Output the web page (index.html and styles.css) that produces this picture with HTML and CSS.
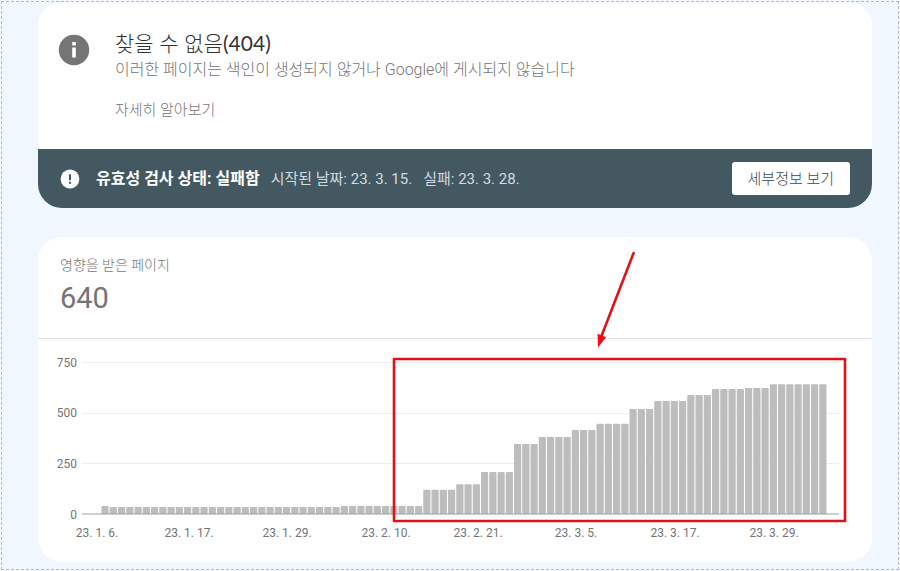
FILE: index.html
```html
<!DOCTYPE html>
<html lang="ko">
<head>
    <meta charset="UTF-8">
    <meta name="viewport" content="width=device-width, initial-scale=1.0">
    <title>찾을 수 없음(404)</title>
    <link rel="stylesheet" href="styles.css">
</head>

<body>

<main class="page">
    <!-- Issue summary -->
    <section class="card">
        <div class="issue">
            <svg class="info-icon" viewBox="0 0 32 32" aria-hidden="true">
                <circle cx="16" cy="16" r="15.2" fill="#757575"/>
                <path d="M14.2 8h3.6v3.4h-3.6zM14.2 13.6h3.6v10h-3.6z" fill="#fff"/>
            </svg>
            <div>
                <h1 class="title">찾을 수 없음<span class="code">(404)</span></h1>
                <p class="text">이러한 페이지는 색인이 생성되지 않거나 Google에 게시되지 않습니다</p>
                <a class="more" href="#">자세히 알아보기</a>
            </div>
        </div>
        <div class="status">
            <svg class="alert-icon" viewBox="0 0 20 20" aria-hidden="true">
                <circle cx="10" cy="10" r="9.4" fill="#fff"/>
                <path d="M9 5.2h2v6H9zM9 12.8h2v2H9z" fill="#455a64"/>
            </svg>
            <strong class="state">유효성 검사 상태: 실패함</strong>
            <span class="date">시작된 날짜: 23. 3. 15.</span>
            <span class="date">실패: 23. 3. 28.</span>
            <button class="details" type="button">세부정보 보기</button>
        </div>
    </section>

    <!-- Affected pages -->
    <section class="card chart-card">
        <div class="count">
            <h2 class="label">영향을 받은 페이지</h2>
            <div class="number">640</div>
        </div>
        <svg class="chart" viewBox="0 0 834 223" role="img" aria-label="영향을 받은 페이지">
            <g class="grid">
                <path d="M44 23.5H801M44 74.5H801M44 124.5H801"/>
            </g>
            <g id="bars" class="bars"></g>
            <path class="base" d="M44 175H801"/>
            <g class="y-axis">
                <text x="39" y="28">750</text>
                <text x="39" y="78">500</text>
                <text x="39" y="129">250</text>
                <text x="39" y="180">0</text>
            </g>
            <g class="x-axis">
                <text x="59" y="198">23. 1. 6.</text>
                <text x="151" y="198">23. 1. 17.</text>
                <text x="249" y="198">23. 1. 29.</text>
                <text x="348" y="198">23. 2. 10.</text>
                <text x="440" y="198">23. 2. 21.</text>
                <text x="538" y="198">23. 3. 5.</text>
                <text x="637" y="198">23. 3. 17.</text>
                <text x="736" y="198">23. 3. 29.</text>
            </g>
        </svg>
        <!-- Red frame and arrow over the chart -->
        <svg class="mark" viewBox="0 0 834 325" aria-hidden="true">
            <rect x="356" y="122" width="451" height="162" fill="none" stroke="#e01218" stroke-width="2.6" stroke-linejoin="round"/>
            <path d="M595.6 16L563.5 99" stroke="#e01218" stroke-width="2.6" stroke-linecap="round"/>
            <path d="M560 110.5L559.6 96.8L568 100.2z" fill="#f00c10"/>
        </svg>
    </section>
</main>

<script>
    // [number of days, affected pages]
    const steps = [
        [1, 39], [28, 34], [10, 39], [4, 120], [3, 147], [4, 207],
        [3, 345], [4, 380], [3, 414], [4, 445], [3, 518], [4, 557],
        [3, 587], [4, 617], [3, 622], [7, 640]
    ];
    const bars = document.getElementById('bars');
    let day = 0;

    steps.forEach(function ([days, pages]) {
        for (let i = 0; i < days; i++) {
            const height = pages * 152 / 750;
            const bar = document.createElementNS('http://www.w3.org/2000/svg', 'path');
            const x = 63.5 + day * 8.25;
            bar.setAttribute('d', `M${x} 175v${1 - height}q0-1 1-1h5.2q1 0 1 1V175z`);
            bars.appendChild(bar);
            day++;
        }
    });
</script>

</body>
</html>
```
FILE: styles.css
```css
* {
    box-sizing: border-box;
}
body {
    margin: 0;
    padding: 1px;
    background-color: #f1f7fe;
    font-family: Roboto, "Noto Sans CJK KR", sans-serif;
    color: #757575;
}
.page {
    border: 1px dashed #b4bac8;
    padding: 0 26px 7px 36px;
}
.card {
    background: #fff;
    border-radius: 24px;
    overflow: hidden;
}
.issue {
    display: flex;
    gap: 25px;
    height: 147px;
    padding: 26px 20px;
}
.info-icon {
    width: 32px;
    height: 32px;
    margin-top: 6px;
}
.title {
    margin: 0;
    font-family: Lato, "Noto Sans CJK KR", sans-serif;
    font-size: 21px;
    font-weight: 300;
    line-height: 30px;
    color: #333;
}
.code {
    font-weight: 400;
}
.text {
    margin: 0;
    font-size: 16px;
    font-weight: 300;
    line-height: 24px;
}
.more {
    display: block;
    margin-top: 16px;
    font-size: 15px;
    font-weight: 300;
    line-height: 24px;
    color: #757575;
    text-decoration: none;
}
.status {
    display: flex;
    align-items: center;
    height: 59px;
    padding: 0 22px;
    background: #435861;
    color: #cfdce2;
}
.alert-icon {
    width: 20px;
    height: 20px;
    margin-right: 16px;
}
.state,
.date {
    padding-bottom: 3px;
}
.state {
    font-size: 16px;
    font-weight: 700;
    color: #fff;
}
.date {
    margin-left: 11px;
    font-size: 15px;
}
.details {
    height: 33px;
    margin-left: auto;
    padding: 0 16px 2px;
    border: none;
    border-radius: 3px;
    background: #fff;
    font-family: inherit;
    font-size: 15px;
    font-weight: 300;
    color: #37474f;
    cursor: pointer;
}
.chart-card {
    position: relative;
    margin-top: 29px;
}
.count {
    height: 102px;
    padding: 18px 22px;
    border-bottom: 1px solid #e2e2e2;
}
.label {
    margin: 0;
    font-size: 14px;
    font-weight: 300;
    line-height: 20px;
}
.number {
    font-size: 29px;
    line-height: 46px;
}
.chart {
    display: block;
    width: 100%;
    font-size: 12px;
}
.grid {
    stroke: #eee;
}
.base {
    stroke: #9e9e9e;
}
.bars {
    fill: #bdbdbd;
}
.y-axis {
    fill: #757575;
    text-anchor: end;
}
.x-axis {
    fill: #757575;
    text-anchor: middle;
}
.mark {
    position: absolute;
    top: 0;
    left: 0;
    width: 100%;
}
```
